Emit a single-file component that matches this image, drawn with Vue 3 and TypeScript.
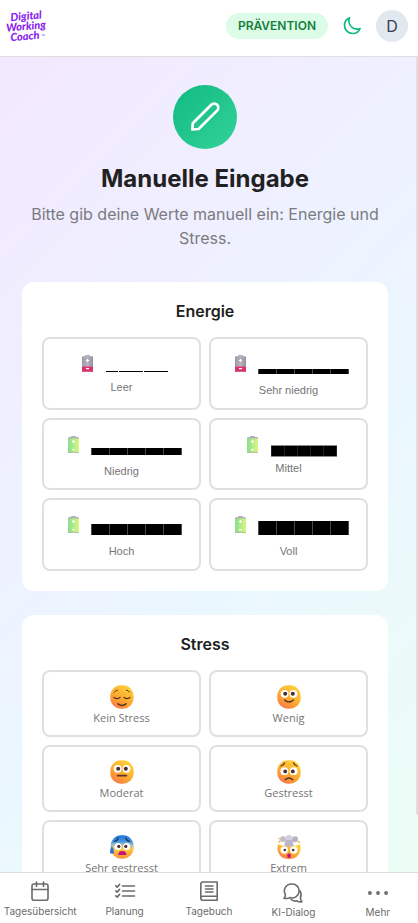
<script setup lang="ts">
import { ref } from 'vue'

interface EnergyLevel {
  id: string
  label: string
  low: boolean
  compact?: boolean
}

interface StressLevel {
  id: string
  label: string
}

const energyLevels: EnergyLevel[] = [
  { id: 'empty', label: 'Leer', low: true, compact: true },
  { id: 'very-low', label: 'Sehr niedrig', low: true },
  { id: 'low', label: 'Niedrig', low: false },
  { id: 'medium', label: 'Mittel', low: false, compact: true },
  { id: 'high', label: 'Hoch', low: false },
  { id: 'full', label: 'Voll', low: false },
]

const stressLevels: StressLevel[] = [
  { id: 'none', label: 'Kein Stress' },
  { id: 'little', label: 'Wenig' },
  { id: 'moderate', label: 'Moderat' },
  { id: 'stressed', label: 'Gestresst' },
  { id: 'very', label: 'Sehr gestresst' },
  { id: 'extreme', label: 'Extrem' },
]

const energy = ref<string | null>(null)
const stress = ref<string | null>(null)
</script>

<template>
  <div class="app">
    <svg class="defs" width="0" height="0" aria-hidden="true">
      <defs>
        <linearGradient id="face" x1="0.8" y1="0" x2="0.2" y2="1">
          <stop offset="0" stop-color="#ffd43b" />
          <stop offset="0.55" stop-color="#fdab30" />
          <stop offset="0.85" stop-color="#fb8a3c" />
          <stop offset="1" stop-color="#ee6a72" />
        </linearGradient>
        <linearGradient id="cold" x1="0" y1="0" x2="0" y2="1">
          <stop offset="0" stop-color="#1f74d8" />
          <stop offset="0.25" stop-color="#3f94e8" />
          <stop offset="0.45" stop-color="#b9c4b0" />
          <stop offset="0.6" stop-color="#ffc63e" />
          <stop offset="1" stop-color="#fb9335" />
        </linearGradient>
        <linearGradient id="charge" x1="0" y1="0" x2="1" y2="0">
          <stop offset="0" stop-color="#86e08f" />
          <stop offset="1" stop-color="#dcf582" />
        </linearGradient>
        <linearGradient id="shell" x1="0" y1="0" x2="1" y2="0">
          <stop offset="0" stop-color="#9d98a4" />
          <stop offset="0.5" stop-color="#b9b2c0" />
          <stop offset="1" stop-color="#96909d" />
        </linearGradient>
      </defs>
    </svg>

    <header class="topbar">
      <a class="logo" href="#" aria-label="Digital Working Coach">
        <svg width="44" height="36" viewBox="0 0 44 36">
          <g transform="rotate(-5 20 18)" class="logo-text">
            <text x="22" y="12" text-anchor="middle">Digital</text>
            <text x="21" y="22" text-anchor="middle">Working</text>
            <text x="19" y="32" text-anchor="middle">Coach</text>
          </g>
          <path d="M37 27h3" stroke="#a66bf0" stroke-width="1" />
        </svg>
      </a>
      <div class="actions">
        <span class="chip">PRÄVENTION</span>
        <button class="theme" type="button" aria-label="Dunkelmodus">
          <svg width="20" height="20" viewBox="0 0 24 24" fill="none" stroke="#10b981" stroke-width="2" stroke-linecap="round" stroke-linejoin="round">
            <path d="M21.752 15.002A9.72 9.72 0 0 1 18 15.75c-5.385 0-9.75-4.365-9.75-9.75 0-1.33.266-2.597.748-3.752A9.753 9.753 0 0 0 3 11.25C3 16.635 7.365 21 12.75 21a9.753 9.753 0 0 0 9.002-5.998Z" />
          </svg>
        </button>
        <button class="avatar" type="button">D</button>
      </div>
    </header>

    <div class="body">
      <main class="content">
        <section class="intro">
          <div class="badge">
            <svg width="32" height="32" viewBox="0 0 32 32" fill="none" stroke="#fff" stroke-width="2.7" stroke-linejoin="round">
              <path d="M3.3 28.5 3.8 22.3 22.3 3.8a4.1 4.1 0 0 1 5.8 5.8L9.6 28Z" />
            </svg>
          </div>
          <h1>Manuelle Eingabe</h1>
          <p>Bitte gib deine Werte manuell ein: Energie und Stress.</p>
        </section>

        <section class="card">
          <h2>Energie</h2>
          <div class="grid grid-energy">
            <button
              v-for="level in energyLevels"
              :key="level.id"
              type="button"
              class="option energy"
              :aria-pressed="energy === level.id"
              @click="energy = level.id"
            >
              <span class="gauge">
                <span class="battery">
                  <svg width="11" height="17" viewBox="0 0 11 17">
                    <rect x="3" y="0" width="5" height="2" rx="0.6" fill="#b5b0b8" />
                    <rect x="0" y="1.2" width="11" height="15.8" rx="1" fill="url(#shell)" />
                    <rect v-if="level.low" x="0" y="11.6" width="11" height="5" fill="#e0316b" />
                    <rect v-else x="0" y="2.4" width="11" height="14" fill="url(#charge)" />
                    <path d="M5.5 4v3M4 5.5h3M4 13.6h3" stroke="#fff" stroke-width="1.1" />
                  </svg>
                </span>
                <span class="bars" :class="level.id">
                  <i v-for="n in 5" :key="n"></i>
                </span>
              </span>
              <span class="option-label" :class="{ compact: level.compact }">{{ level.label }}</span>
            </button>
          </div>
        </section>

        <section class="card">
          <h2>Stress</h2>
          <div class="grid">
            <button
              v-for="level in stressLevels"
              :key="level.id"
              type="button"
              class="option stress"
              :aria-pressed="stress === level.id"
              @click="stress = level.id"
            >
              <svg width="24" height="24" viewBox="0 0 24 24" fill="none" stroke-linecap="round">
                <template v-if="level.id === 'none'">
                  <rect x="0.3" y="0.3" width="23.4" height="23.4" rx="10.6" fill="url(#face)" />
                  <g stroke="#5b3426" stroke-width="1.3">
                    <path d="M4 12.4q3 2.4 6 0M14 12.4q3 2.4 6 0" />
                    <path d="M4.4 7.2q1.2-2 3.2-2.2M19.6 7.2q-1.2-2-3.2-2.2" stroke-width="1" />
                    <path d="M8 18.8q4 3.2 8 0" stroke-width="1.5" />
                  </g>
                </template>
                <template v-else-if="level.id === 'little'">
                  <rect x="0.3" y="0.3" width="23.4" height="23.4" rx="10.6" fill="url(#face)" />
                  <circle cx="7.6" cy="8.8" r="3.9" fill="#fff" />
                  <circle cx="16.4" cy="8.8" r="3.9" fill="#fff" />
                  <circle cx="8.2" cy="8.8" r="2" fill="#4b2c32" />
                  <circle cx="15.8" cy="8.8" r="2" fill="#4b2c32" />
                  <path d="M7.6 15q4.4 4 8.8 0" stroke="#5b3426" stroke-width="1.5" />
                </template>
                <template v-else-if="level.id === 'moderate'">
                  <rect x="0.3" y="0.3" width="23.4" height="23.4" rx="10.6" fill="url(#face)" />
                  <circle cx="7.6" cy="8.8" r="3.9" fill="#fff" />
                  <circle cx="16.4" cy="8.8" r="3.9" fill="#fff" />
                  <circle cx="8.2" cy="8.8" r="2" fill="#4b2c32" />
                  <circle cx="15.8" cy="8.8" r="2" fill="#4b2c32" />
                  <path d="M7.6 15.6h8.8" stroke="#5b3426" stroke-width="1.7" />
                </template>
                <template v-else-if="level.id === 'stressed'">
                  <rect x="0.3" y="0.3" width="23.4" height="23.4" rx="10.6" fill="url(#face)" />
                  <path d="M4 6q2.8-.8 3.4-3M20 6q-2.8-.8-3.4-3" stroke="#6b3a20" stroke-width="1.3" />
                  <circle cx="7.4" cy="11.2" r="3.9" fill="#fff" />
                  <circle cx="16.6" cy="11.2" r="3.9" fill="#fff" />
                  <circle cx="8.2" cy="11.4" r="1.9" fill="#4b2c32" />
                  <circle cx="15.8" cy="11.4" r="1.9" fill="#4b2c32" />
                  <path d="M8.2 19.8q3.8-3.6 7.6 0" stroke="#5b3426" stroke-width="1.5" />
                </template>
                <template v-else-if="level.id === 'very'">
                  <rect x="0.6" y="0.3" width="23.1" height="23.4" rx="10.6" fill="url(#cold)" />
                  <path d="M4.4 6.4q3-.6 3.8-3.2M19.6 6.4q-3-.6-3.8-3.2" stroke="#27364f" stroke-width="1.4" />
                  <circle cx="8" cy="11.4" r="3.5" fill="#fff" />
                  <circle cx="16.6" cy="11.4" r="3.5" fill="#fff" />
                  <circle cx="8.8" cy="11.4" r="1.6" fill="#4b2c32" />
                  <circle cx="15.8" cy="11.4" r="1.6" fill="#4b2c32" />
                  <path d="M8.2 20q0-4 4.1-4t4.1 4Z" fill="#c3127f" />
                  <path d="M1.8 11.2q2.8 3.4 2.2 6.2a2.2 2.2 0 0 1-4 0q-.4-3 1.8-6.2Z" fill="#2f6fe0" />
                </template>
                <template v-else>
                  <path d="M1 9q4 3 11 1 7 2 11-1 1.6 6-1.4 10.4Q18.6 24 12 24t-9.6-4.6Q-.6 15 1 9Z" fill="url(#face)" />
                  <path d="M2 7l1-1M21.4 6.4l1 1M1.6 3.6l.6.2" stroke="#f4a637" stroke-width="1.2" />
                  <circle cx="6" cy="4.2" r="3" fill="#c3bdc9" />
                  <circle cx="18" cy="4.2" r="3" fill="#b9b1c3" />
                  <circle cx="12" cy="3.6" r="3.6" fill="#d3ced9" />
                  <path d="M8.6 5h7l1.2 6q-4.8 1.6-9.6 0Z" fill="#bdb5c9" />
                  <circle cx="7.2" cy="15" r="3.7" fill="#fff" />
                  <circle cx="16.8" cy="15" r="3.7" fill="#fff" />
                  <circle cx="7.8" cy="15" r="1.3" fill="#4b2c32" />
                  <circle cx="16.2" cy="15" r="1.3" fill="#4b2c32" />
                  <ellipse cx="12" cy="20.8" rx="1.9" ry="2.3" fill="#c3127f" />
                </template>
              </svg>
              <span class="option-label">{{ level.label }}</span>
            </button>
          </div>
        </section>
      </main>
      <div class="scroll-thumb"></div>
    </div>

    <nav class="tabs">
      <a href="#">
        <svg width="20" height="20" viewBox="0 0 20 20" fill="none" stroke="currentColor" stroke-width="1.6" stroke-linecap="round" stroke-linejoin="round">
          <rect x="2" y="3" width="16" height="16.2" rx="2" />
          <path d="M2 8.5h16M6.5 1v4.5M13.5 1v4.5" />
        </svg>
        <span>Tagesübersicht</span>
      </a>
      <a href="#">
        <svg width="20" height="20" viewBox="0 0 20 20" fill="none" stroke="currentColor" stroke-width="1.6" stroke-linecap="round" stroke-linejoin="round">
          <path d="M7.5 5h12M7.5 10h12M7.5 15h12M.8 4.8l1.4 1.3L4.6 3.4M.8 9.8l1.4 1.3L4.6 8.4M.8 14.8l1.4 1.3 2.4-2.7" />
        </svg>
        <span>Planung</span>
      </a>
      <a href="#">
        <svg width="20" height="20" viewBox="0 0 20 20" fill="none" stroke="currentColor" stroke-width="1.6" stroke-linecap="round" stroke-linejoin="round">
          <path d="M18.2 15.2V1H3.8a2 2 0 0 0-2 2v14.2a2 2 0 0 0 2 2h14.4v-4H3.8a2 2 0 0 0-2 2M6.5 5h7.5M6.5 8h7.5M6.5 11h7.5" />
        </svg>
        <span>Tagebuch</span>
      </a>
      <a href="#" class="lowered">
        <svg width="20" height="20" viewBox="0 0 20 20" fill="none" stroke="currentColor" stroke-width="1.6" stroke-linecap="round" stroke-linejoin="round">
          <path d="M8.6 1a7 7 0 1 1-1.7 13.6Q4.6 16 1 15.2 2.5 13.6 2.4 11.600A7 7 0 0 1 8.6 1Z" />
          <path d="M16.8 7.6q2.4 3.6.6 7.2.2 2.6 1.6 4-3.2.4-5-1-3.4 1-6-1.6" />
        </svg>
        <span>KI-Dialog</span>
      </a>
      <a href="#" class="lowered">
        <svg width="20" height="20" viewBox="0 0 20 20" fill="currentColor">
          <circle cx="1.9" cy="10" r="1.9" />
          <circle cx="10" cy="10" r="1.9" />
          <circle cx="18.1" cy="10" r="1.9" />
        </svg>
        <span>Mehr</span>
      </a>
    </nav>
  </div>
</template>

<style>
body {
  margin: 0;
}
</style>

<style scoped>
* {
  box-sizing: border-box;
}
.app {
  display: flex;
  flex-direction: column;
  height: 100vh;
  overflow: hidden;
  font-family: Inter, "Liberation Sans", sans-serif;
  color: #212121;
}
button {
  border: 0;
  padding: 0;
  background: none;
  font: inherit;
  color: inherit;
  cursor: pointer;
}
svg {
  display: block;
  flex: none;
  overflow: visible;
}
.defs {
  position: absolute;
}
.topbar {
  display: flex;
  flex: none;
  align-items: center;
  justify-content: space-between;
  height: 57px;
  padding: 0 10px 4px 5px;
  border-bottom: 1px solid #dedee2;
  background: #fff;
}
.logo-text {
  font-family: Lato, sans-serif;
  font-size: 11px;
  font-style: italic;
  font-weight: 900;
  fill: #8a24ee;
}
.actions {
  display: flex;
  align-items: center;
}
.chip {
  padding: 0 12px;
  border-radius: 13px;
  background: #dcfce7;
  color: #15803d;
  font-size: 12px;
  font-weight: 600;
  line-height: 26px;
}
.theme {
  padding: 0 14px;
}
.avatar {
  width: 32px;
  height: 32px;
  border-radius: 50%;
  background: #e2e8f0;
  color: #334155;
  font-size: 16px;
}
.body {
  position: relative;
  flex: 1;
  min-height: 0;
  background: linear-gradient(135deg, #f3e8ff 0%, #ebf7ff 60%, #ecfdf5 100%);
}
.content {
  height: 100%;
  padding: 28px 30px 24px 22px;
  overflow-y: auto;
  scrollbar-width: none;
}
.scroll-thumb {
  position: absolute;
  top: 0;
  right: 0;
  width: 2px;
  height: 93%;
  border-radius: 2px 0 0 2px;
  background: #dedee0;
}
.intro {
  display: flex;
  flex-direction: column;
  align-items: center;
  margin-bottom: 32px;
  text-align: center;
}
.badge {
  display: flex;
  align-items: center;
  justify-content: center;
  width: 64px;
  height: 64px;
  margin-bottom: 15px;
  border-radius: 50%;
  background: linear-gradient(135deg, #10b981, #34d399);
}
h1 {
  margin: 0 0 9px;
  font-size: 24px;
  font-weight: 700;
  line-height: 29px;
}
.intro p {
  margin: 0;
  color: #7b7b80;
  font-size: 16px;
  line-height: 24px;
}
.card {
  margin-bottom: 24px;
  padding: 20px;
  border-radius: 12px;
  background: #fff;
}
h2 {
  margin: 0 0 16px;
  font-size: 16px;
  font-weight: 600;
  line-height: 19px;
  text-align: center;
}
.grid {
  display: grid;
  grid-template-columns: 1fr 1fr;
  gap: 8px;
}
.grid-energy {
  grid-auto-rows: 1fr;
  min-height: 234px;
}
.option {
  display: flex;
  flex-direction: column;
  align-items: center;
  border: 2px solid #e0e0e0;
  border-radius: 8px;
  background: #fff;
  color: #757575;
}
.option-label {
  font-size: 11px;
  line-height: 16px;
}
.energy {
  padding: 16px 4px 8px;
  font-family: "Liberation Sans", Arial, sans-serif;
}
.energy .option-label {
  margin-top: 8px;
}
.energy .option-label.compact {
  margin-top: 5px;
}
.gauge {
  display: flex;
  gap: 6px;
  height: 19px;
}
.battery {
  display: flex;
  justify-content: center;
  width: 24px;
}
.bars {
  display: grid;
  grid-template-columns: repeat(5, 17px);
  align-self: flex-end;
  gap: 1px;
  padding: 0 1px;
  height: 5px;
  background: #4a4a4a;
}
.bars i {
  background: #000;
}
.bars.empty {
  grid-template-columns: 12px 24px 24px;
  padding: 0;
  height: 1px;
  margin-bottom: 2px;
  background: none;
}
.bars.empty i:nth-child(n + 4) {
  display: none;
}
.bars.low {
  height: 7px;
}
.bars.medium {
  grid-template-columns: repeat(5, 12px);
  height: 12px;
  margin-bottom: -2px;
  border: solid #8a8a8a;
  border-width: 1px 0;
  background: #222;
}
.bars.high {
  height: 11px;
}
.bars.full {
  height: 14px;
}
.stress {
  padding: 13px 4px 9px;
  font-family: "Open Sans", "Noto Sans", sans-serif;
}
.stress .option-label {
  margin-top: 1px;
}
.tabs {
  display: grid;
  flex: none;
  grid-template-columns: repeat(5, 1fr);
  height: 51px;
  margin: 0 -2px;
  border-top: 1px solid #dedede;
  background: #fff;
}
.tabs a {
  display: flex;
  flex-direction: column;
  align-items: center;
  gap: 2px;
  padding-top: 8px;
  color: #6b6b6b;
  font-size: 10px;
  line-height: 16px;
  text-decoration: none;
}
.tabs .lowered {
  gap: 1px;
  padding-top: 10px;
}
</style>
